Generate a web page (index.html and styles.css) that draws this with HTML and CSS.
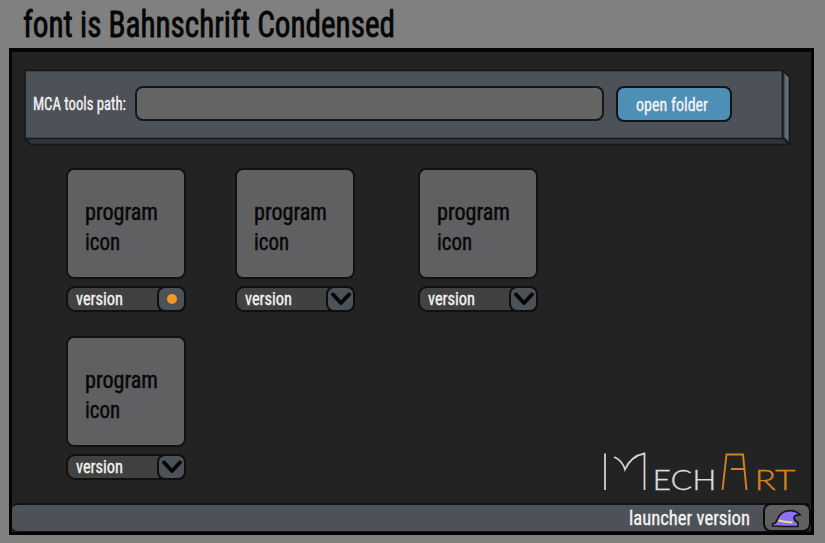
FILE: index.html
```
<!DOCTYPE html>
<html lang="en">
<head>
<meta charset="utf-8">
<title>MechArt launcher</title>
<link rel="stylesheet" href="styles.css">
</head>
<body>
<svg class="title" width="400" height="48"><text x="23" y="37" textLength="372" lengthAdjust="spacingAndGlyphs">font is Bahnschrift Condensed</text></svg>
<main class="window">
  <section class="path-panel">
    <svg class="panel-shape" width="768" height="78" viewBox="0 0 768 78">
      <path d="M1.5 70.500 7 75.500H765.500V8L759 2" fill="#30343a"/>
      <path d="M760.500 4 765 8V72L760.500 68z" fill="#646c77"/>
      <path d="M1 1.500H758.500V69.500H1z" fill="#4d5158"/>
      <path d="M1 1.500H758.500V69.500H1zM1 69.500 6.500 75.500H765.500V8L759 2M759 69.500 765 75" fill="none" stroke="#15171a" stroke-width="1.600"/>
    </svg>
    <svg class="path-label" width="95" height="30"><text x="0" y="21" textLength="93" lengthAdjust="spacingAndGlyphs">MCA tools path:</text></svg>
    <div class="path-input"></div>
    <div class="open-button"><svg width="74" height="30"><text x="0" y="22" textLength="72" lengthAdjust="spacingAndGlyphs">open folder</text></svg></div>
  </section>
  <section class="programs">
    <article class="program">
      <div class="tile"><svg width="80" height="70"><text x="0" y="26" textLength="73" lengthAdjust="spacingAndGlyphs">program</text><text x="0" y="56" textLength="35" lengthAdjust="spacingAndGlyphs">icon</text></svg></div>
      <div class="version"><svg class="version-label" width="50" height="22"><text x="0" y="17" textLength="47" lengthAdjust="spacingAndGlyphs">version</text></svg><div class="toggle"><span class="dot"></span></div></div>
    </article>
    <article class="program">
      <div class="tile"><svg width="80" height="70"><text x="0" y="26" textLength="73" lengthAdjust="spacingAndGlyphs">program</text><text x="0" y="56" textLength="35" lengthAdjust="spacingAndGlyphs">icon</text></svg></div>
      <div class="version"><svg class="version-label" width="50" height="22"><text x="0" y="17" textLength="47" lengthAdjust="spacingAndGlyphs">version</text></svg><div class="toggle"><svg class="chevron" width="20" height="14"><path d="M2 2.500 10 11 18 2.500"/></svg></div></div>
    </article>
    <article class="program">
      <div class="tile"><svg width="80" height="70"><text x="0" y="26" textLength="73" lengthAdjust="spacingAndGlyphs">program</text><text x="0" y="56" textLength="35" lengthAdjust="spacingAndGlyphs">icon</text></svg></div>
      <div class="version"><svg class="version-label" width="50" height="22"><text x="0" y="17" textLength="47" lengthAdjust="spacingAndGlyphs">version</text></svg><div class="toggle"><svg class="chevron" width="20" height="14"><path d="M2 2.500 10 11 18 2.500"/></svg></div></div>
    </article>
    <article class="program">
      <div class="tile"><svg width="80" height="70"><text x="0" y="26" textLength="73" lengthAdjust="spacingAndGlyphs">program</text><text x="0" y="56" textLength="35" lengthAdjust="spacingAndGlyphs">icon</text></svg></div>
      <div class="version"><svg class="version-label" width="50" height="22"><text x="0" y="17" textLength="47" lengthAdjust="spacingAndGlyphs">version</text></svg><div class="toggle"><svg class="chevron" width="20" height="14"><path d="M2 2.500 10 11 18 2.500"/></svg></div></div>
    </article>
  </section>
  <svg class="logo" width="200" height="48" viewBox="600 446 200 48">
    <g fill="none" stroke="#d4d4d4" stroke-width="1.800">
      <path d="M605 453.500V490"/>
      <path d="M614 457Q622 460 625 469.500Q631 456 644.500 453.500V490"/>
    </g>
    <path d="M722.500 490 726.500 454.500H743L746.500 490M731 469H744" fill="none" stroke="#d6821f" stroke-width="1.900"/>
    <text class="logo-white" x="652.500" y="490" textLength="64" lengthAdjust="spacingAndGlyphs">ECH</text>
    <text class="logo-orange" x="754.500" y="490" textLength="41" lengthAdjust="spacingAndGlyphs">RT</text>
  </svg>
  <footer class="footer">
    <svg class="launcher" width="122" height="28"><text x="0" y="19.500" textLength="121" lengthAdjust="spacingAndGlyphs">launcher version</text></svg>
    <div class="hat-button">
      <svg width="32" height="22" viewBox="772 507 32 22">
        <path d="M773.500 523Q777 522.500 778 519Q781 512 786 510.500Q795 507.500 801.500 514Q795 513.500 795 517Q795.500 520 799 521.500V525.500H786L773.500 525z" fill="#8b72f5" stroke="#17131f" stroke-width="1.700" stroke-linejoin="round"/>
        <path d="M779.500 519.500Q786 521 793.500 521.500" fill="none" stroke="#f2dc7c" stroke-width="2.200"/>
      </svg>
    </div>
  </footer>
</main>
</body>
</html>
```
FILE: styles.css
```
* { box-sizing: border-box; }
body {
  margin: 0;
  width: 825px;
  height: 543px;
  overflow: hidden;
  background: #808080;
  font-family: Roboto, "Liberation Sans", sans-serif;
  font-stretch: 75%;
}
svg { display: block; flex: none; overflow: visible; }
text { font-weight: 400; fill: #f2f2f2; stroke: #f2f2f2; stroke-width: 0.35; }
.title text { font-size: 36px; fill: #050505; stroke: #050505; stroke-width: 0.8; }
.window {
  position: relative;
  width: 805px;
  height: 487px;
  margin-left: 9px;
  border: 3px solid #050505;
  border-top-width: 4px;
  background: #232323;
  display: flex;
  flex-direction: column;
}
.path-panel {
  position: relative;
  display: flex;
  align-items: flex-start;
  width: 768px;
  height: 78px;
  margin: 17px 0 0 12px;
  padding: 17px 0 0 9px;
}
.panel-shape { position: absolute; left: 0; top: 0; }
.path-label, .path-input, .open-button { position: relative; }
.path-label text, .open-button text { font-size: 18.5px; }
.path-label { margin-top: 3px; }
.path-input {
  width: 469px;
  height: 35px;
  margin-left: 7px;
  border: 2px solid #15171a;
  border-radius: 8px;
  background: #646464;
}
.open-button {
  width: 116px;
  height: 36px;
  margin-left: 12px;
  padding: 1px 0 0 18px;
  border: 2px solid #101419;
  border-radius: 8px;
  background: #4d8fb5;
}
.programs {
  display: grid;
  grid-template-columns: 169px 183px 120px;
  grid-template-rows: 168px 144px;
  margin: 21px 0 0 54px;
}
.program { width: 120px; }
.tile {
  height: 111px;
  padding: 24px 0 0 17px;
  border: 2px solid #121212;
  border-radius: 8px;
  background: #606062;
}
.tile text { font-size: 24.5px; fill: #080808; stroke: #080808; stroke-width: 0.5; }
.version {
  display: flex;
  justify-content: space-between;
  height: 26px;
  margin-top: 7px;
  border: 2px solid #101010;
  border-radius: 9px;
  background: #414141;
}
.version-label { margin-left: 8px; }
.version-label text { font-size: 18px; }
.toggle {
  width: 29px;
  height: 26px;
  margin: -2px -2px 0 0;
  border: 2px solid #0e0f10;
  border-radius: 8px;
  background: #4d5158;
  display: flex;
  align-items: center;
  justify-content: center;
}
.dot { width: 10px; height: 10px; border-radius: 50%; background: #f79627; }
.chevron path { fill: none; stroke: #060606; stroke-width: 4; stroke-linecap: round; stroke-linejoin: round; }
.logo { position: absolute; left: 588px; top: 394px; }
.logo text { font-family: Lato, sans-serif; font-size: 28px; font-weight: 300; font-stretch: normal; stroke-width: 0.3; }
.logo .logo-white { fill: #dcdcdc; stroke: #dcdcdc; }
.logo .logo-orange { fill: #d6821f; stroke: #d6821f; }
.footer {
  display: flex;
  justify-content: flex-end;
  height: 29px;
  margin-top: auto;
  border: 2px solid #111316;
  border-width: 2px 0 1px 0;
  border-radius: 6px;
  background: #4d5158;
}
.launcher { margin-right: 12px; }
.launcher text { font-size: 20.5px; }
.hat-button {
  width: 48px;
  height: 29px;
  margin-top: -2px;
  padding: 3px 0 0 6px;
  border: 2px solid #0b0b0b;
  border-radius: 8px;
  background: #606060;
}
```
